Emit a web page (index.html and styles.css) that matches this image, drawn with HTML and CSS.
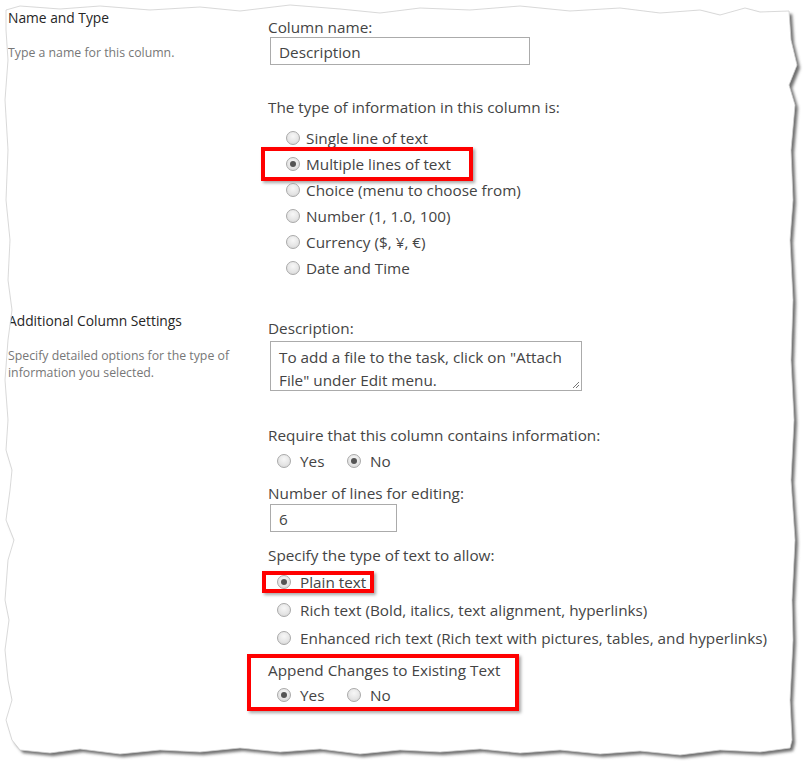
FILE: index.html
```html
<!DOCTYPE html>
<html>
<head>
<meta charset="utf-8">
<link rel="stylesheet" href="styles.css">
</head>
<body>
<div class="page">
  <section class="section s1">
    <div class="side">
      <h2>Name and Type</h2>
      <p>Type a name for this column.</p>
    </div>
    <div class="fields">
      <div class="label">Column name:</div>
      <div class="input w260">Description</div>
      <div class="label gap-type">The type of information in this column is:</div>
      <div class="list list-type">
        <div class="opt"><span class="radio"></span>Single line of text</div>
        <div class="opt hl"><span class="radio on"></span>Multiple lines of text<span class="mark mark1"></span></div>
        <div class="opt"><span class="radio"></span>Choice (menu to choose from)</div>
        <div class="opt"><span class="radio"></span>Number (1, 1.0, 100)</div>
        <div class="opt"><span class="radio"></span>Currency ($, ¥, €)</div>
        <div class="opt"><span class="radio"></span>Date and Time</div>
      </div>
    </div>
  </section>
  <section class="section s2">
    <div class="side">
      <h2>Additional Column Settings</h2>
      <p>Specify detailed options for the type of information you selected.</p>
    </div>
    <div class="fields">
      <div class="label">Description:</div>
      <div class="textarea">To add a file to the task, click on "Attach File" under Edit menu.
        <svg class="grip" width="10" height="10" viewBox="0 0 10 10"><path d="M9 3L3 9M9 6L6 9" stroke="#777" stroke-width="1"/></svg>
      </div>
      <div class="label gap-req">Require that this column contains information:</div>
      <div class="inline">
        <div class="opt2"><span class="radio"></span>Yes</div>
        <div class="opt2"><span class="radio on"></span>No</div>
      </div>
      <div class="label gap-num">Number of lines for editing:</div>
      <div class="input w126">6</div>
      <div class="label gap-spec">Specify the type of text to allow:</div>
      <div class="list list-text">
        <div class="opt3 hl"><span class="radio on"></span>Plain text<span class="mark mark2"></span></div>
        <div class="opt3"><span class="radio"></span>Rich text (Bold, italics, text alignment, hyperlinks)</div>
        <div class="opt3"><span class="radio"></span>Enhanced rich text (Rich text with pictures, tables, and hyperlinks)</div>
      </div>
      <div class="append">
        <div class="label">Append Changes to Existing Text</div>
        <div class="inline append-row">
          <div class="opt2"><span class="radio on"></span>Yes</div>
          <div class="opt2"><span class="radio"></span>No</div>
        </div>
      </div>
    </div>
  </section>
  <svg class="torn" width="807" height="766" viewBox="0 0 807 766">
    <defs>
      <clipPath id="outside"><path clip-rule="evenodd" d="M0 0H807V766H0Z M6 10L20 6L60 9L100 6L150 10L200 7L240 11L290 5L340 9L380 13L420 8L470 10L520 6L570 11L620 8L660 13L700 10L720 15L745 8L760 12L789 11L791 40L797 65L789 85L795 105L791 150L793 200L790 240L793 300L791 360L794 420L791 480L795 540L792 600L793 640L790 700L792 740L790 748L760 752L720 750L680 755L640 751L600 754L560 750L520 753L480 749L440 752L400 750L360 754L320 749L280 752L240 748L200 752L160 750L120 754L80 749L50 753L20 750L12 740L6 720L12 700L8 680L5 650L9 620L5 600L8 560L14 540L6 520L10 490L12 470L6 450L8 420L5 380L8 340L12 310L8 280L10 240L6 200L8 150L5 100L8 60L6 30Z"/></clipPath>
      <filter id="blur" x="-5%" y="-5%" width="110%" height="110%"><feGaussianBlur stdDeviation="1.8"/></filter>
    </defs>
    <path fill="#fff" fill-rule="evenodd" d="M0 0H807V766H0Z M6 10L20 6L60 9L100 6L150 10L200 7L240 11L290 5L340 9L380 13L420 8L470 10L520 6L570 11L620 8L660 13L700 10L720 15L745 8L760 12L789 11L791 40L797 65L789 85L795 105L791 150L793 200L790 240L793 300L791 360L794 420L791 480L795 540L792 600L793 640L790 700L792 740L790 748L760 752L720 750L680 755L640 751L600 754L560 750L520 753L480 749L440 752L400 750L360 754L320 749L280 752L240 748L200 752L160 750L120 754L80 749L50 753L20 750L12 740L6 720L12 700L8 680L5 650L9 620L5 600L8 560L14 540L6 520L10 490L12 470L6 450L8 420L5 380L8 340L12 310L8 280L10 240L6 200L8 150L5 100L8 60L6 30Z"/>
    <g clip-path="url(#outside)">
      <path fill="#6e6e6e" filter="url(#blur)" transform="translate(3,3)" d="M6 10L20 6L60 9L100 6L150 10L200 7L240 11L290 5L340 9L380 13L420 8L470 10L520 6L570 11L620 8L660 13L700 10L720 15L745 8L760 12L789 11L791 40L797 65L789 85L795 105L791 150L793 200L790 240L793 300L791 360L794 420L791 480L795 540L792 600L793 640L790 700L792 740L790 748L760 752L720 750L680 755L640 751L600 754L560 750L520 753L480 749L440 752L400 750L360 754L320 749L280 752L240 748L200 752L160 750L120 754L80 749L50 753L20 750L12 740L6 720L12 700L8 680L5 650L9 620L5 600L8 560L14 540L6 520L10 490L12 470L6 450L8 420L5 380L8 340L12 310L8 280L10 240L6 200L8 150L5 100L8 60L6 30Z"/>
    </g>
    <path fill="none" stroke="#cfcfcf" stroke-width="0.8" d="M6 10L20 6L60 9L100 6L150 10L200 7L240 11L290 5L340 9L380 13L420 8L470 10L520 6L570 11L620 8L660 13L700 10L720 15L745 8L760 12L789 11L791 40L797 65L789 85L795 105L791 150L793 200L790 240L793 300L791 360L794 420L791 480L795 540L792 600L793 640L790 700L792 740L790 748L760 752L720 750L680 755L640 751L600 754L560 750L520 753L480 749L440 752L400 750L360 754L320 749L280 752L240 748L200 752L160 750L120 754L80 749L50 753L20 750L12 740L6 720L12 700L8 680L5 650L9 620L5 600L8 560L14 540L6 520L10 490L12 470L6 450L8 420L5 380L8 340L12 310L8 280L10 240L6 200L8 150L5 100L8 60L6 30Z"/>
  </svg>
</div>
</body>
</html>
```
FILE: styles.css
```css
* { box-sizing: border-box; }
body {
  margin: 0;
  background: #fff;
  font-family: "Open Sans", "Noto Sans", sans-serif;
  color: #444;
}
.page {
  position: relative;
  width: 807px;
  height: 766px;
  overflow: hidden;
}
.section {
  display: grid;
  grid-template-columns: 268px 1fr;
}
.s1 { margin-top: 8px; }
.s2 { margin-top: 30px; }
.side { padding-left: 8px; }
.side h2 {
  margin: 0;
  font-size: 13.8px;
  font-weight: 400;
  line-height: 20px;
  color: #262626;
}
.side p {
  margin: 16px 0 0;
  font-size: 12.3px;
  line-height: 17px;
  color: #777;
  width: 240px;
}
.s1 .fields { padding-top: 9px; }
.s2 .fields { padding-top: 7px; }
.label {
  font-size: 15.3px;
  line-height: 20px;
  color: #444;
}
.input {
  margin-left: 2px;
  height: 28px;
  border: 1px solid #ababab;
  padding: 1px 0 0 8px;
  font-size: 15.3px;
  line-height: 26px;
  color: #444;
}
.w260 { width: 260px; }
.w126 { width: 127px; margin-top: 1px; }
.gap-type { margin-top: 32px; }
.list-type { margin-top: 8px; padding-left: 18px; }
.opt, .opt2, .opt3 {
  display: flex;
  align-items: center;
  font-size: 15.3px;
  color: #444;
  white-space: nowrap;
}
.opt { height: 26px; }
.opt .radio { margin-right: 6px; }
.opt3 { height: 28px; }
.opt3 .radio { margin-right: 9px; }
.list-text { margin-top: 3px; padding-left: 9px; }
.hl { position: relative; }
.mark {
  position: absolute;
  border: 4px solid #f00;
  box-shadow: 2px 2px 3px rgba(0,0,0,0.35);
  pointer-events: none;
}
.mark1 { left: -25px; top: -4px; width: 212px; height: 34px; }
.mark2 { left: -15px; top: 3px; width: 112px; height: 22px; }
.radio {
  flex: none;
  width: 14px;
  height: 14px;
  border-radius: 50%;
  border: 1px solid #a9a9a9;
  background: radial-gradient(circle at 50% 35%, #f7f7f7 0%, #e6e6e6 55%, #d2d2d2 100%);
  position: relative;
}
.radio.on::after {
  content: "";
  position: absolute;
  left: 3px;
  top: 3px;
  width: 6px;
  height: 6px;
  border-radius: 50%;
  background: #555;
}
.inline {
  display: flex;
  padding-left: 9px;
}
.s2 .inline { margin-top: 3px; height: 26px; }
.opt2 { height: 26px; }
.opt2 .radio { margin-right: 9px; }
.opt2:first-child { width: 70px; }
.textarea {
  position: relative;
  margin-top: 3px;
  margin-left: 2px;
  width: 312px;
  height: 50px;
  border: 1px solid #ababab;
  padding: 4px 8px 0;
  font-size: 15.3px;
  line-height: 23px;
  color: #444;
}
.grip { position: absolute; right: 1px; bottom: 1px; }
.gap-req { margin-top: 34px; }
.gap-num { margin-top: 9px; }
.gap-spec { margin-top: 13px; }
.append {
  margin-left: -21px;
  margin-top: 2px;
  width: 272px;
  height: 57px;
  border: 4px solid #f00;
  box-shadow: 2px 2px 3px rgba(0,0,0,0.35);
  padding: 2px 0 0 17px;
}
.append .inline { padding-left: 9px; margin-top: 3px; height: 24px; }
.append .opt2 { height: 24px; }
.torn {
  position: absolute;
  left: 0;
  top: 0;
  pointer-events: none;
}
```
